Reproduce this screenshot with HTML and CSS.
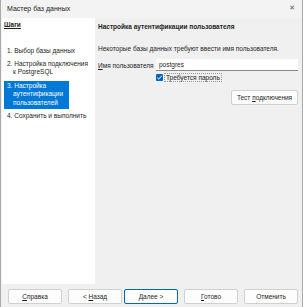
FILE: index.html
```html
<!DOCTYPE html>
<html>
<head>
    <link rel="stylesheet" href="styles.css">
</head>
<body>
    <div class="window">
        <div class="titlebar">
            <span class="title">Мастер баз данных</span>
            <span class="close">✕</span>
        </div>

        <div class="main">
            <div class="steps">
                <div class="steps-head">Шаги</div>
                <ul class="step-list">
                    <li>1. Выбор базы данных</li>
                    <li>2. Настройка подключения<br><span class="cont">к PostgreSQL</span></li>
                    <li class="active">3. Настройка<br><span class="cont">аутентификации</span><br><span class="cont">пользователей</span></li>
                    <li>4. Сохранить и выполнить</li>
                </ul>
            </div>

            <div class="page">
                <h2>Настройка аутентификации пользователя</h2>
                <p class="desc">Некоторые базы данных требуют ввести имя пользователя.</p>

                <div class="field">
                    <label><u>И</u>мя пользователя</label>
                    <div class="input">postgres</div>
                </div>
                <div class="check-row">
                    <span class="checkbox">
                        <svg width="7" height="7" viewBox="0 0 7 7"><path d="M1.2 3.6 L2.8 5.1 L5.8 1.8" fill="none" stroke="#fff" stroke-width="1"/></svg>
                    </span>
                    <span class="check-label">Требуется пароль</span>
                </div>
                <div class="test-row">
                    <a href="#" class="btn"><span>Тест <u>п</u>одключения</span></a>
                </div>
            </div>
        </div>

        <div class="footer">
            <a href="#" class="btn"><span><u>С</u>правка</span></a>
            <div class="nav-pair">
                <a href="#" class="btn"><span>&lt; <u>Н</u>азад</span></a>
                <a href="#" class="btn default"><span><u>Д</u>алее &gt;</span></a>
            </div>
            <a href="#" class="btn"><span><u>Г</u>отово</span></a>
            <a href="#" class="btn">Отменить</a>
        </div>
    </div>
</body>
</html>
```

FILE: styles.css
```css
* {
    margin: 0;
    padding: 0;
    box-sizing: border-box;
}

body {
    font-family: "Liberation Sans", Arial, sans-serif;
    font-size: 6.5px;
    color: #1e1e1e;
    background: #f0f0f0;
}

.window {
    width: 303px;
    height: 307px;
    background: #f0f0f0;
    border-left: 1px solid #a9a9a9;
    border-right: 1px solid #a9a9a9;
    display: flex;
    flex-direction: column;
}

.titlebar {
    height: 18px;
    background: #f3f3f3;
    display: flex;
    align-items: center;
    justify-content: space-between;
    padding: 0 7px 2px 6px;
}

.title {
    font-size: 7px;
    color: #222;
}

.close {
    font-family: "DejaVu Sans", sans-serif;
    font-size: 7px;
    color: #555;
}

.main {
    flex: 1;
    display: flex;
}

.steps {
    width: 93px;
    background: #fff;
    margin-left: 1px;
    padding: 2px 0 0 2px;
}

.steps-head {
    font-weight: 700;
    text-decoration: underline;
    line-height: 9px;
}

.step-list {
    list-style: none;
    margin-top: 17.75px;
}

.step-list li {
    padding: 0 3px;
    margin-bottom: 4.5px;
    line-height: 8.5px;
    white-space: nowrap;
}

.step-list .cont {
    padding-left: 6px;
}

.step-list li.active {
    width: 65px;
    background: #0078d7;
    color: #fff;
    padding: 0.5px 3px 2px;
    margin-bottom: 3px;
}

.page {
    flex: 1;
    padding: 2px 4px 0 3px;
}

.page h2 {
    font-size: 6.5px;
    font-weight: 700;
    line-height: 9px;
    margin-top: 2px;
}

.desc {
    margin-top: 13px;
    line-height: 9px;
}

.field {
    display: flex;
    align-items: center;
    margin-top: 6px;
}

.field label {
    width: 58px;
    white-space: nowrap;
}

.input {
    flex: 1;
    height: 12px;
    background: #fff;
    border-bottom: 1px solid #888;
    padding: 0 3px;
    line-height: 11px;
}

.check-row {
    display: flex;
    align-items: center;
    margin: 2px 0 0 58px;
    gap: 1px;
}

.checkbox {
    width: 7px;
    height: 7px;
    background: #0067c0;
    border-radius: 1px;
    display: flex;
}

.check-label {
    border: 1px dotted #999;
    padding: 0 1px;
    line-height: 7px;
}

.test-row {
    display: flex;
    justify-content: flex-end;
    margin-top: 8px;
}

.btn {
    display: inline-flex;
    align-items: center;
    justify-content: center;
    height: 15px;
    background: #fdfdfd;
    border: 1px solid #d0d0d0;
    border-radius: 2px;
    color: #1e1e1e;
    text-decoration: none;
    padding: 0 4px;
    white-space: nowrap;
}

.test-row .btn {
    width: 67px;
}

.footer {
    height: 23px;
    display: flex;
    align-items: center;
    padding: 1px 4px 0 7px;
    gap: 6px;
}

.nav-pair {
    display: flex;
    gap: 2px;
}

.footer .btn {
    width: 54px;
}

.footer .btn.default {
    border: 1px solid #0067c0;
}
```
